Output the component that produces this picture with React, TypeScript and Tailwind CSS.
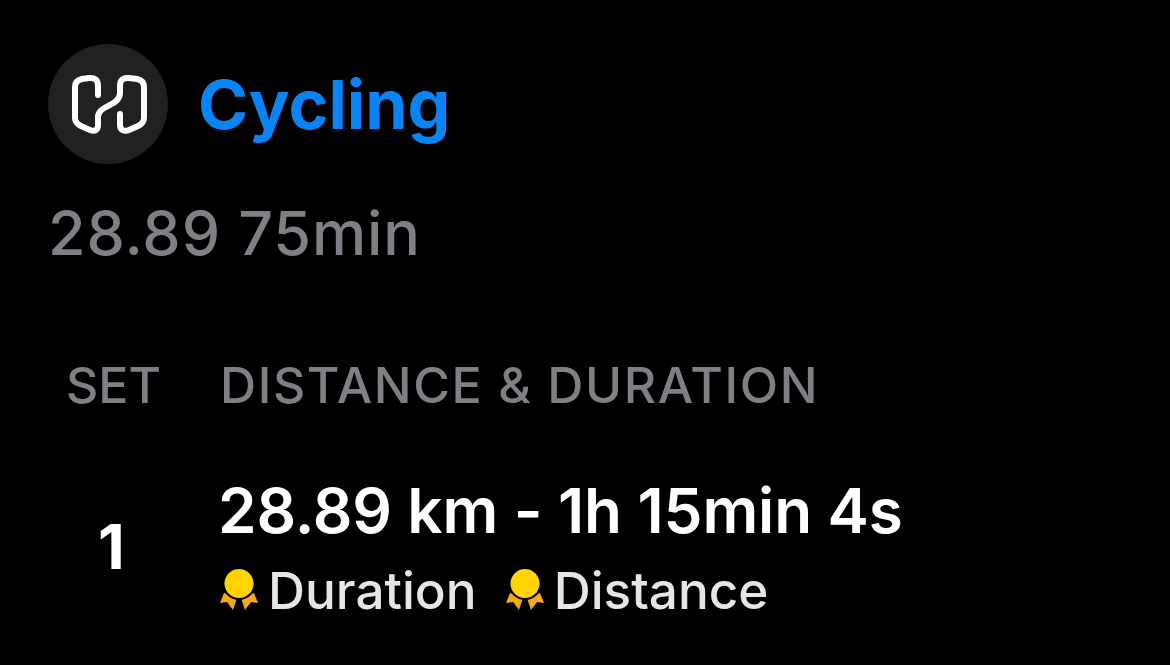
function Logo() {
  return (
    <div className="w-[120px] h-[120px] rounded-full bg-[#212121] shrink-0">
      <svg viewBox="0 0 120 120" className="w-[120px] h-[120px]" fill="none" stroke="#fff" strokeWidth="6" strokeLinecap="round" strokeLinejoin="round">
        <path d="M50 51V42C50 36 47 33.5 41 34L34 35C29.5 36 27 38.5 27 43V74C27 78 29 80 33 82L42 86C47 88 50 86 50 81V73C50 61 72 62 72 49V42C72 36 75 33.5 81 34L89 35C93.5 36 96 38.5 96 43V74C96 78 94 80 90 82L81 86C76 88 72 86 72 81V70" />
      </svg>
    </div>
  );
}

function Medal() {
  return (
    <svg viewBox="0 0 40 42" className="w-10 h-[42px] shrink-0">
      <path d="M5 24L1 34L8 33L14 41L18 29Z" fill="#f5a81c" />
      <path d="M35 24L39 34L32 33L26 41L22 29Z" fill="#f5a81c" />
      <circle cx="20" cy="14.5" r="16.5" fill="#000" />
      <circle cx="20" cy="14.5" r="14.5" fill="#ffd400" />
    </svg>
  );
}

export default function App() {
  return (
    <div className="w-[1170px] h-[665px] bg-black overflow-hidden font-['Inter','Roboto',sans-serif] pt-[44px] pl-[48px]">
      <div className="flex items-center gap-[30px]">
        <Logo />
        <span className="text-[#0a84f5] text-[68px] leading-none font-bold">Cycling</span>
      </div>
      <div className="mt-[34px] text-[#7d8084] text-[61px] leading-[70px] font-[550] tracking-[0.9px]">28.89 75min</div>
      <div className="mt-[89px] flex items-center text-[#7d8084] text-[50px] leading-[56px] font-[550]">
        <span className="w-[172px] pl-[18px]">SET</span>
        <span className="tracking-[1.6px]">DISTANCE &amp; DURATION</span>
      </div>
      <div className="mt-[63px] flex items-center text-white">
        <span className="w-[170px] pl-[50px] text-[62px] font-bold leading-none">1</span>
        <div>
          <div className="text-[62px] leading-[70px] font-semibold tracking-[-0.12px]">28.89 km - 1h 15min 4s</div>
          <div className="mt-[16px] flex items-center text-[#e6e6e6] text-[51.25px] leading-[56px] font-[550]">
            <span className="ml-[1px]"><Medal /></span>
            <span className="ml-[9px]">Duration</span>
            <span className="ml-[28px]"><Medal /></span>
            <span className="ml-[9px]">Distance</span>
          </div>
        </div>
      </div>
    </div>
  );
}
